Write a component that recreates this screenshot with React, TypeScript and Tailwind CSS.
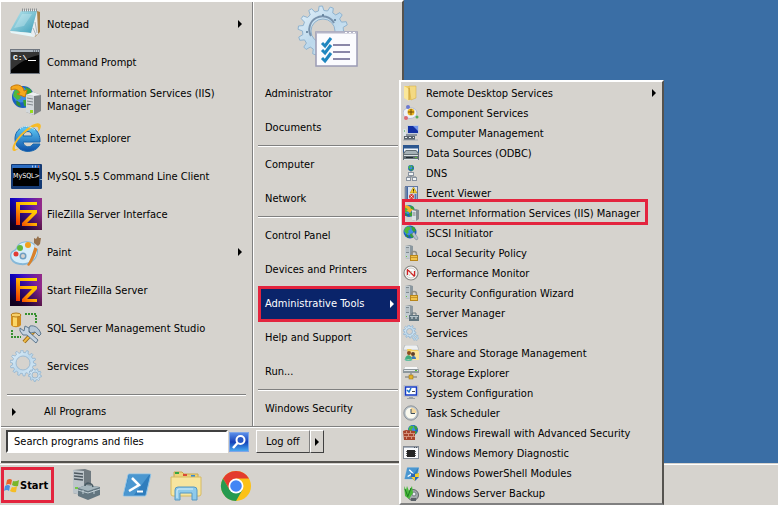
import type { ReactNode } from "react";

interface IconProps {
  className?: string;
}

interface MenuItem {
  label: string;
  icon?: ReactNode;
  submenu?: boolean;
  marked?: boolean;
}

/* ---------- shared drawing parts ---------- */

interface GearProps {
  cx: number;
  cy: number;
  outer: number;
  body: number;
  hole: number;
  teeth: number;
  line?: number;
}

function gearPath({ cx, cy, outer, body, teeth }: GearProps) {
  const points: string[] = [];
  for (let i = 0; i < teeth; i++) {
    const offsets: [number, number][] = [
      [0, body],
      [0.15, outer],
      [0.45, outer],
      [0.6, body],
    ];
    for (const [offset, radius] of offsets) {
      const angle = ((i + offset) / teeth) * Math.PI * 2;
      points.push(
        `${(cx + Math.cos(angle) * radius).toFixed(2)} ${(cy + Math.sin(angle) * radius).toFixed(2)}`,
      );
    }
  }
  return `M${points.join("L")}Z`;
}

function Gear(props: GearProps) {
  const { cx, cy, hole, line = 0.8 } = props;
  const ring = `M${cx - hole} ${cy}a${hole} ${hole} 0 1 0 ${hole * 2} 0a${hole} ${hole} 0 1 0 ${-hole * 2} 0Z`;

  return (
    <g>
      <defs>
        <linearGradient id="gear" x1="0" y1="0" x2="1" y2="1">
          <stop offset="0" stopColor="#e6f3fb" />
          <stop offset="0.5" stopColor="#bcd8ec" />
          <stop offset="1" stopColor="#dcecf7" />
        </linearGradient>
      </defs>
      <path
        d={gearPath(props) + ring}
        fill="url(#gear)"
        fillRule="evenodd"
        stroke="#8fb3cf"
        strokeWidth={line}
      />
    </g>
  );
}

function Tower() {
  return (
    <g>
      <path d="M2 1 7 0l3 1v12l-3 1-5-1z" fill="#8b979e" />
      <path d="M2 1h5v13l-5-1z" fill="#c3ccd1" />
      <path d="M3 3h3M3 5h3M3 7h3" stroke="#3d4a52" />
      <path d="M3 4h3M3 6h3" stroke="#f2f5f6" />
      <rect x="3" y="11" width="1" height="1" fill="#6bbf3a" />
    </g>
  );
}

function Globe({ cx, cy, r }: { cx: number; cy: number; r: number }) {
  return (
    <g transform={`translate(${cx} ${cy}) scale(${r / 10})`}>
      <circle r="10" fill="#1b5fc0" />
      <circle cx="-2" cy="-2" r="7" fill="#3d8be6" />
      <path d="M-8-5C-5-9-1-9 1-7L0-4l-3 2 1 3-3 2-4-4z" fill="#4fb83c" />
      <path d="M2-9 7-7 9-2 6 0 3-3zM0 3l5-1 3 2-4 5-3-1z" fill="#3aa334" />
      <path d="M-6 3l3 2 1 4-4-2z" fill="#2f8f34" />
    </g>
  );
}

function Padlock() {
  return (
    <g>
      <path d="M8.500 11V9a2.500 2.500 0 0 1 5 0v2" fill="none" stroke="#8d8d86" strokeWidth="1.500" />
      <rect x="7" y="10" width="8" height="6" fill="#b8861b" />
      <rect x="8" y="11" width="6" height="4" fill="#f0c34c" />
      <path d="M8 12.500h6" stroke="#c9952b" />
    </g>
  );
}

/* ---------- large icons ---------- */

function Svg32({ children, className = "size-8" }: IconProps & { children: ReactNode }) {
  return (
    <svg viewBox="0 0 32 32" className={`${className} shrink-0`} aria-hidden="true">
      {children}
    </svg>
  );
}

function NotepadIcon() {
  return (
    <Svg32>
      <defs>
        <linearGradient id="pad" x1="0" y1="0" x2="1" y2="1">
          <stop offset="0" stopColor="#bfe9f0" />
          <stop offset="1" stopColor="#3c9db8" />
        </linearGradient>
      </defs>
      <path d="M27 3l3 1v20l-5 5z" fill="#a8814a" />
      <path d="M13 2h14l1 24-5 3z" fill="#e9edf0" />
      <path d="M23 20l3 7M25 14l2 11" stroke="#a9b5bd" />
      <path d="M11 3h16l-6 22L0 23z" fill="url(#pad)" />
      <path d="M0 23l21 2 3 4L1 25z" fill="#e6f6f9" />
      <path d="M12 6h10l-8 12-10 2z" fill="#e4f8fb" opacity="0.3" />
      <path d="M12 2h15" stroke="#8d9396" strokeWidth="3" strokeDasharray="1 1" />
    </Svg32>
  );
}

function CommandPromptIcon() {
  return (
    <Svg32>
      <rect x="0" y="3" width="30" height="25" fill="#707780" />
      <rect x="1" y="4" width="28" height="2" fill="#a9b2bb" />
      <path d="M23 5h1M25 5h1M27 5h1" stroke="#39414a" />
      <rect x="1" y="6" width="28" height="21" fill="#050505" />
      <path d="M1 6h28v3C18 11 9 17 1 24z" fill="#343434" />
      <text x="3" y="14" fill="#fff" fontSize="8" fontWeight="bold" fontFamily="Liberation Mono, monospace">
        C:\
      </text>
      <path d="M18 14.500h8" stroke="#fff" />
    </Svg32>
  );
}

function IisIcon() {
  return (
    <Svg32>
      <Globe cx={13} cy={13} r={11} />
      <path d="M1 3C8-2 14 3 14 7l3-1-2 7-8-3 3-1C9 6 5 4 1 6z" fill="#f6a81c" stroke="#c87808" />
      <path d="M16 11l7-3 8 3v16l-7 4-8-3z" fill="#7e8386" />
      <path d="M16 11l8 1v19l-8-3z" fill="#d3d8db" />
      <path d="M17 14l6 1M17 17l6 1M17 20l6 1" stroke="#82898d" />
      <path d="M16 11l7-3 8 3-7 1z" fill="#edf0f1" />
      <rect x="20" y="26" width="3" height="3" fill="#9add1f" />
    </Svg32>
  );
}

function InternetExplorerIcon() {
  return (
    <Svg32>
      <defs>
        <linearGradient id="ie" x1="0" y1="0" x2="0" y2="1">
          <stop offset="0" stopColor="#62cdf6" />
          <stop offset="1" stopColor="#0b4fa8" />
        </linearGradient>
      </defs>
      <path
        d="M30 20H13c1 6 8 6 10 2h7c-4 11-25 10-25-5C5 0 31 0 30 20zM13 14h9c0-6-8-6-9 0z"
        fill="url(#ie)"
        stroke="#1766ae"
        fillRule="evenodd"
      />
      <path
        d="M9 26C2 33 0 27 6 18S26-2 30 2c2 2 0 6-2 8 1-4 0-6-3-5C19 6 7 17 5 24c-1 4 1 4 4 2z"
        fill="#f7bb27"
      />
      <path d="M10 7c4-4 11-3 15 1" stroke="#c5eefe" fill="none" />
    </Svg32>
  );
}

function MySqlIcon() {
  return (
    <Svg32>
      <rect x="1" y="4" width="31" height="25" rx="1" fill="#153a73" />
      <rect x="2" y="5" width="28" height="3" fill="#2c6cc0" />
      <path d="M22 6.500h1M25 6.500h1" stroke="#a9c8ef" strokeWidth="2" />
      <path d="M28 6.500h1" stroke="#e1502f" strokeWidth="2" />
      <rect x="3" y="8" width="26" height="18" fill="#000" />
      <text
        x="3"
        y="18"
        fill="#fff"
        fontSize="7"
        textRendering="geometricPrecision"
        fontFamily="DejaVu Sans Condensed, sans-serif"
      >
        {"MySQL>_"}
      </text>
    </Svg32>
  );
}

function FileZillaIcon() {
  return (
    <Svg32>
      <defs>
        <linearGradient id="fz-bg" x1="0" y1="0" x2="1" y2="0">
          <stop offset="0" stopColor="#0000f0" />
          <stop offset="1" stopColor="#962a86" />
        </linearGradient>
        <linearGradient id="fz-shade" x1="1" y1="0" x2="0.3" y2="1">
          <stop offset="0.3" stopColor="#200008" stopOpacity="0" />
          <stop offset="1" stopColor="#120008" stopOpacity="0.9" />
        </linearGradient>
        <linearGradient id="fz-ink" x1="1" y1="0" x2="0" y2="1">
          <stop offset="0" stopColor="#ffe600" />
          <stop offset="0.5" stopColor="#ffb000" />
          <stop offset="1" stopColor="#f02000" />
        </linearGradient>
      </defs>
      <rect width="32" height="32" fill="url(#fz-bg)" />
      <rect width="32" height="32" fill="url(#fz-shade)" />
      <path d="M6 4h21v3H10v5h17v3L17 25h10v3H12v-3l10-10H10v12H6z" fill="url(#fz-ink)" />
    </Svg32>
  );
}

function PaintIcon() {
  return (
    <Svg32>
      <path d="M12 6c9-3 17 3 16 10-1 9-9 14-18 13C2 28-2 22 1 16c2-2 4-2 5-4 1-3 3-5 6-6z" fill="#86b8d8" />
      <path d="M12 7c9-3 15 3 15 9-1 8-8 12-17 11C3 26 0 21 2 17c2-2 4-2 5-4 1-3 2-5 5-6z" fill="#d6edf9" />
      <circle cx="18" cy="9" r="3" fill="#f2a11b" />
      <circle cx="10" cy="12" r="3" fill="#62b83f" />
      <circle cx="6" cy="18" r="2.500" fill="#e23c34" />
      <circle cx="13" cy="20" r="3.500" fill="#6d9fc2" />
      <circle cx="13" cy="20" r="2" fill="#d6d3ce" />
      <path d="M25 9l3 2c-2 7-4 13-9 19l-2-1c4-6 6-13 8-20z" fill="#d9822b" />
      <path d="M25 7l4 2-1 4-4-2z" fill="#d5d9dc" />
      <path d="M24 2l2 1 2-3 1 2 2 0-1 6-2 2-4-3z" fill="#96714c" />
    </Svg32>
  );
}

function SqlStudioIcon() {
  return (
    <Svg32>
      <path d="M1 3v10c2 3 8 3 10 0V3z" fill="#d28e1e" />
      <path d="M3 3v11h4V3z" fill="#fbd667" />
      <ellipse cx="6" cy="3" rx="5" ry="2" fill="#f7cf69" stroke="#b67b18" />
      <path d="M15 2h11v10" fill="none" stroke="#37902f" strokeWidth="2" strokeDasharray="2 1" />
      <path d="M2 18v7h9" fill="none" stroke="#37902f" strokeWidth="2" strokeDasharray="2 1" />
      <path d="M25 18L14 30" stroke="#9a6a17" strokeWidth="4" />
      <path d="M25 18L14 30" stroke="#edb944" strokeWidth="2" />
      <path d="M20 14c5-1 9 2 11 8l-2 2-4-4-4 1-3-3z" fill="#b7c7d6" stroke="#5f788e" />
      <path d="M10 16l4 3 1-5 4 2 0 4 9 8-2 3-9-8-4 0-3-4z" fill="#c4d3e1" stroke="#5f788e" />
    </Svg32>
  );
}

function ServicesLargeIcon() {
  return (
    <Svg32>
      <Gear cx={13} cy={13} outer={13} body={10.5} hole={7} teeth={14} />
      <Gear cx={25} cy={25} outer={6.5} body={5} hole={3} teeth={9} />
    </Svg32>
  );
}

function AdminToolsPicture() {
  return (
    <svg viewBox="0 0 64 64" className="size-16" aria-hidden="true">
      <Gear cx={26} cy={27} outer={25} body={20.5} hole={12} teeth={14} line={1} />
      <path d="M14 32a13 13 0 0 1 23-13" fill="none" stroke="#7993ad" strokeWidth="2" />
      <circle cx="26" cy="11" r="1" fill="#557590" />
      <circle cx="10" cy="28" r="1" fill="#557590" />
      <circle cx="38" cy="16" r="1" fill="#557590" />
      <rect x="19" y="28" width="41" height="34" fill="#fbfbfe" stroke="#9b9bb4" strokeWidth="1.500" />
      <path d="M19 28.500h41" stroke="#b6b6c8" strokeWidth="2" />
      <path d="M48 28.500h2M52 28.500h2M56 28.500h2" stroke="#fff" />
      <path d="M36 41h17M36 48h17M36 55h17" stroke="#8a87a8" strokeWidth="2" />
      <path d="M25 39l3 3 6-8M25 46l3 3 6-8M25 54l3 3 6-8" fill="none" stroke="#1f86bf" strokeWidth="3" />
    </svg>
  );
}

/* ---------- small icons ---------- */

function Svg16({ children }: { children: ReactNode }) {
  return (
    <svg viewBox="0 0 16 16" className="size-4 shrink-0" aria-hidden="true">
      {children}
    </svg>
  );
}

function FolderIcon() {
  return (
    <Svg16>
      <path d="M1 1h5l2 2v12l-7-2z" fill="#eecb60" />
      <path d="M6 1h7v12l-5 2z" fill="#f3d982" stroke="#d0a83c" strokeWidth="0.500" />
      <path d="M1 1l5 3v12l-5-3z" fill="#fbe79a" />
      <path d="M6 3v12" stroke="#c99a2e" />
    </Svg16>
  );
}

function ComponentIcon() {
  return (
    <Svg16>
      <ellipse cx="7" cy="8" rx="7" ry="5.500" fill="#eef1f8" stroke="#b5bdd4" />
      <circle cx="5" cy="2" r="2" fill="#6c79cf" />
      <circle cx="3" cy="13" r="2" fill="#dc6a74" />
      <circle cx="14" cy="12" r="1.500" fill="#55ad5a" />
      <circle cx="8" cy="7" r="3.500" fill="#edb620" />
      <path d="M8 4v6M5 7h6" stroke="#6e4a08" />
    </Svg16>
  );
}

function ComputerIcon() {
  return (
    <Svg16>
      <rect x="4" y="0" width="12" height="9" fill="#c4ccd8" />
      <rect x="5" y="1" width="10" height="7" fill="#1330a3" />
      <path d="M10 1h5v5z" fill="#7295ea" />
      <path d="M0 4h3v7H0z" fill="#dce2e5" />
      <path d="M1 6h1" stroke="#37a23b" />
      <path d="M3 9h11v2H3z" fill="#8c949d" />
      <rect x="1" y="11" width="11" height="4" fill="#59636c" />
      <path d="M2 12.500h2M6 12.500h2M10 12.500h1" stroke="#e7edf0" />
      <path d="M0 15h15" stroke="#a3abb0" />
    </Svg16>
  );
}

function OdbcIcon() {
  return (
    <Svg16>
      <rect x="0.500" y="0.500" width="15" height="8" fill="#edf3f8" stroke="#2c578f" />
      <path d="M0 2h16" stroke="#2c578f" strokeWidth="3" />
      <path d="M3 5h10l3 3v7H0V8z" fill="#626d73" />
      <path d="M3 6h10l2 3H1z" fill="#a5b1b6" />
      <path d="M1 10.500h14M1 14.500h14" stroke="#dce2e4" />
      <path d="M3 12.500h7" stroke="#222c32" />
      <path d="M12 12.500h2" stroke="#62c23b" />
    </Svg16>
  );
}

function DnsIcon() {
  return (
    <Svg16>
      <Globe cx={8} cy={3} r={3} />
      <path d="M8 6v6M4 12h9" stroke="#7b858f" />
      <rect x="5.500" y="7.500" width="5" height="3" fill="#f1f4f6" stroke="#8993a0" />
      <rect x="3.500" y="12.500" width="4" height="3" fill="#f1f4f6" stroke="#8993a0" />
      <rect x="9.500" y="12.500" width="4" height="3" fill="#f1f4f6" stroke="#8993a0" />
    </Svg16>
  );
}

function EventViewerIcon() {
  return (
    <Svg16>
      <rect x="2.500" y="1.500" width="12" height="13" fill="#dae4f0" stroke="#6379a3" />
      <rect x="3" y="2" width="2" height="12" fill="#4468a5" />
      <path d="M1 3h3M1 5h3M1 7h3M1 9h3M1 11h3M1 13h3" stroke="#909aa6" />
      <path d="M10.500 2l3.500 6H7z" fill="#f5cf29" stroke="#a77d12" strokeWidth="0.500" />
      <path d="M10.500 4v2M10.500 6.500v1" stroke="#463505" />
      <circle cx="8.500" cy="11.500" r="2.500" fill="#d33a31" />
      <path d="M7.500 10.500l2 2M9.500 10.500l-2 2" stroke="#fff" strokeWidth="0.800" />
      <path d="M12.500 9v5" stroke="#5277ac" strokeWidth="2" />
    </Svg16>
  );
}

function IisSmallIcon() {
  return (
    <Svg16>
      <Globe cx={6} cy={6} r={6} />
      <path d="M0 1c4-2 7 0 8 3h2L7 8 3 5h2C4 3 2 2 0 3z" fill="#f5b026" />
      <path d="M9 5l4-1 3 1v9l-3 2-4-1z" fill="#838d92" />
      <path d="M9 5l4 1v10l-4-1z" fill="#dce2e5" />
      <path d="M9.500 8h3M9.500 10h3" stroke="#728087" />
    </Svg16>
  );
}

function IscsiIcon() {
  return (
    <Svg16>
      <Globe cx={7} cy={7} r={6.5} />
      <path d="M9 9l2-2 4 6-1 2-2-1z" fill="#b5c1cb" stroke="#667a8c" strokeWidth="0.500" />
    </Svg16>
  );
}

function SecurityIcon() {
  return (
    <Svg16>
      <Tower />
      <Padlock />
    </Svg16>
  );
}

function PerformanceIcon() {
  return (
    <Svg16>
      <circle cx="8" cy="8" r="7" fill="#fbfbfa" stroke="#898984" strokeWidth="1.200" />
      <circle cx="8" cy="8" r="5" fill="none" stroke="#9c9c98" strokeWidth="0.500" />
      <path d="M4.500 4.500l7 7M4.500 4v6M11.500 6v5" stroke="#cf2424" strokeWidth="1.300" />
      <path d="M6 11l3-5" stroke="#a5b8a5" strokeWidth="0.700" />
    </Svg16>
  );
}

function ServerManagerIcon() {
  return (
    <Svg16>
      <Tower />
      <rect x="6" y="10" width="10" height="6" fill="#5e737d" />
      <path d="M9 10V8h4v2" fill="none" stroke="#64757d" />
      <path d="M7 11.500h8" stroke="#b6c5cb" />
      <path d="M9 12v2M13 12v2" stroke="#dfe6e9" />
    </Svg16>
  );
}

function ServicesIcon() {
  return (
    <Svg16>
      <Gear cx={6.5} cy={6.5} outer={6.5} body={5} hole={3} teeth={10} />
      <Gear cx={12.5} cy={12.5} outer={3.2} body={2.3} hole={1} teeth={7} line={0.6} />
    </Svg16>
  );
}

function ShareIcon() {
  return (
    <Svg16>
      <path d="M2 0h12l2 5H0z" fill="#eef0f1" stroke="#9ba2a6" strokeWidth="0.500" />
      <path d="M4 4h4l1 1h6v10H6z" fill="#f1ce5e" />
      <path d="M8 6h8v9H5z" fill="#fae49b" />
      <circle cx="6" cy="8" r="2" fill="#8b4d23" />
      <circle cx="10" cy="9" r="2" fill="#60402b" />
      <path d="M2 14c1-5 6-5 7 0z" fill="#3daa7e" />
      <path d="M8 14c0-4 5-4 5 0z" fill="#3e79b7" />
      <path d="M2 14c4 3 5 1 7 0" fill="none" stroke="#63bea0" strokeWidth="2" />
    </Svg16>
  );
}

function StorageIcon() {
  return (
    <Svg16>
      <path d="M2 2h12l2 3v3H0V5z" fill="#8d979c" />
      <path d="M2 2h12l1 2H1z" fill="#f8f9fa" />
      <path d="M1 5.500h14" stroke="#dfe4e7" />
      <path d="M12 5.500h2" stroke="#58b737" />
      <path d="M8 8v5M2 12h12" stroke="#73736e" />
      <rect x="6" y="10" width="4" height="4" fill="#e2b22a" stroke="#946c10" strokeWidth="0.500" />
    </Svg16>
  );
}

function SystemConfigIcon() {
  return (
    <Svg16>
      <rect x="1" y="0.500" width="14" height="11" fill="#e2e5e9" stroke="#a4a8ad" strokeWidth="0.500" />
      <rect x="2.500" y="2" width="11" height="8" fill="#fff" stroke="#173bc3" strokeWidth="1.500" />
      <path d="M4 5l2 2 2-4" fill="none" stroke="#1c75c8" strokeWidth="1.500" />
      <path d="M9 6.500h3" stroke="#4a4a4a" />
      <path d="M6 12h4v1H6zM4 13h8v1H4z" fill="#9ba1a6" />
    </Svg16>
  );
}

function ClockIcon() {
  return (
    <Svg16>
      <circle cx="8" cy="8" r="7.200" fill="#b7c0c7" stroke="#81898f" strokeWidth="0.800" />
      <circle cx="8" cy="8" r="5.500" fill="#faf9ee" />
      <path d="M8 8V2.500A5.500 5.500 0 0 1 13.500 8z" fill="#f2d69c" />
      <path d="M8 4v4.500h4" fill="none" stroke="#3d4e5b" />
    </Svg16>
  );
}

function FirewallIcon() {
  return (
    <Svg16>
      <Globe cx={10} cy={5} r={5} />
      <path d="M0 6l3-1 9 1v9H1z" fill="#a8452c" />
      <path
        d="M1 8.500h11M1 11.500h11M3.500 6v2M7.500 6v2M10.500 9v2M5.500 9v2M3.500 12v2M8.500 12v2"
        stroke="#e0a58e"
        strokeWidth="0.800"
      />
    </Svg16>
  );
}

function MemoryIcon() {
  return (
    <Svg16>
      <rect x="0.500" y="1.500" width="15" height="12" fill="#f8f9fb" stroke="#848a93" />
      <path d="M1 2.500h14" stroke="#a7b1be" />
      <path d="M11 2.500h1M13 2.500h1" stroke="#4a525c" />
      <path d="M3 6.500h10M3 8.500h10M3 10.500h10" stroke="#666" />
      <rect x="4" y="5" width="8" height="7" fill="#242424" />
    </Svg16>
  );
}

function PowerShellArt() {
  return (
    <g>
      <path d="M9 5h21q1 0 0.700 1L26 26q-0.300 1-1.300 1H4q-1 0-0.700-1L8 6q0.200-1 1-1z" fill="#2f7dbd" stroke="#8cc3e8" />
      <path d="M9 6h20L14 26H4z" fill="#5fa8dc" opacity="0.600" />
      <path d="M12 9l7 7-10 6" fill="none" stroke="#fff" strokeWidth="2.500" />
      <path d="M17 22.500h6" stroke="#fff" strokeWidth="2" />
    </g>
  );
}

function PowerShellModulesIcon() {
  return (
    <Svg16>
      <g transform="scale(0.52)">
        <PowerShellArt />
      </g>
      <path d="M8 8l4 1 4-1v4l-4 4-4-4z" fill="#2867b8" />
      <path d="M12 9v3h4V8zM8 12h4v4z" fill="#f3ce31" />
    </Svg16>
  );
}

function BackupIcon() {
  return (
    <Svg16>
      <circle cx="10" cy="10" r="5.500" fill="#a5aaad" stroke="#5e6468" />
      <circle cx="11" cy="9" r="2" fill="#e9edef" stroke="#737d83" />
      <path d="M1 1l2 4 1-4 2 5 3-5 1 7-4 6-4-3z" fill="#49b93b" />
      <path d="M2 4l3 8M8 3L5 11" stroke="#1f7d22" />
      <path d="M8 13h5v3H8z" fill="#5a6167" />
    </Svg16>
  );
}

function FlagIcon() {
  return (
    <svg viewBox="0 0 16 16" className="size-4 shrink-0" aria-hidden="true">
      <path d="M3 2q3-2 5 0L7 7Q5 5 2 7z" fill="#e8632a" />
      <path d="M9 3q3 1 6-1l-1 6q-3 1-6-1z" fill="#79b52c" />
      <path d="M1 8q3-2 5 0l-1 5q-2-2-5 0z" fill="#4b8fdd" />
      <path d="M8 9q3 1 5-1l-1 6q-3 1-6-1z" fill="#f5bd25" />
    </svg>
  );
}

/* ---------- data ---------- */

const programs: MenuItem[] = [
  { label: "Notepad", icon: <NotepadIcon />, submenu: true },
  { label: "Command Prompt", icon: <CommandPromptIcon /> },
  { label: "Internet Information Services (IIS) Manager", icon: <IisIcon /> },
  { label: "Internet Explorer", icon: <InternetExplorerIcon /> },
  { label: "MySQL 5.5 Command Line Client", icon: <MySqlIcon /> },
  { label: "FileZilla Server Interface", icon: <FileZillaIcon /> },
  { label: "Paint", icon: <PaintIcon />, submenu: true },
  { label: "Start FileZilla Server", icon: <FileZillaIcon /> },
  { label: "SQL Server Management Studio", icon: <SqlStudioIcon /> },
  { label: "Services", icon: <ServicesLargeIcon /> },
];

const places: MenuItem[][] = [
  [{ label: "Administrator" }, { label: "Documents" }],
  [{ label: "Computer" }, { label: "Network" }],
  [
    { label: "Control Panel" },
    { label: "Devices and Printers" },
    { label: "Administrative Tools", submenu: true, marked: true },
    { label: "Help and Support" },
    { label: "Run..." },
  ],
  [{ label: "Windows Security" }],
];

const adminTools: MenuItem[] = [
  { label: "Remote Desktop Services", icon: <FolderIcon />, submenu: true },
  { label: "Component Services", icon: <ComponentIcon /> },
  { label: "Computer Management", icon: <ComputerIcon /> },
  { label: "Data Sources (ODBC)", icon: <OdbcIcon /> },
  { label: "DNS", icon: <DnsIcon /> },
  { label: "Event Viewer", icon: <EventViewerIcon /> },
  {
    label: "Internet Information Services (IIS) Manager",
    icon: <IisSmallIcon />,
    marked: true,
  },
  { label: "iSCSI Initiator", icon: <IscsiIcon /> },
  { label: "Local Security Policy", icon: <SecurityIcon /> },
  { label: "Performance Monitor", icon: <PerformanceIcon /> },
  { label: "Security Configuration Wizard", icon: <SecurityIcon /> },
  { label: "Server Manager", icon: <ServerManagerIcon /> },
  { label: "Services", icon: <ServicesIcon /> },
  { label: "Share and Storage Management", icon: <ShareIcon /> },
  { label: "Storage Explorer", icon: <StorageIcon /> },
  { label: "System Configuration", icon: <SystemConfigIcon /> },
  { label: "Task Scheduler", icon: <ClockIcon /> },
  { label: "Windows Firewall with Advanced Security", icon: <FirewallIcon /> },
  { label: "Windows Memory Diagnostic", icon: <MemoryIcon /> },
  { label: "Windows PowerShell Modules", icon: <PowerShellModulesIcon /> },
  { label: "Windows Server Backup", icon: <BackupIcon /> },
];

/* ---------- menu pieces ---------- */

function Arrow() {
  return (
    <svg viewBox="0 0 4 8" className="h-2 w-1 shrink-0" fill="currentColor" aria-hidden="true">
      <path d="M0 0l4 4-4 4z" />
    </svg>
  );
}

function Groove() {
  return <div className="h-0.5 border-t border-b border-t-[#808080] border-b-white" />;
}

function ProgramList() {
  return (
    <div className="flex w-[252px] flex-col border-r border-r-[#808080] pt-[3px]">
      <ul>
        {programs.map((item) => (
          <li key={item.label}>
            <button className="flex h-[38px] w-full items-center gap-[5px] pr-2.5 pl-[9px] text-left">
              {item.icon}
              <span className="flex-1 pr-4 leading-[13px]">{item.label}</span>
              {item.submenu && <Arrow />}
            </button>
          </li>
        ))}
      </ul>
      <div className="px-1.5 pt-[9px]">
        <Groove />
      </div>
      <button className="flex h-[30px] items-center gap-7 px-[11px] pt-0.5 text-left">
        <Arrow />
        All Programs
      </button>
    </div>
  );
}

function PlacesList() {
  return (
    <div className="flex flex-1 flex-col border-l border-l-white pr-1">
      <div className="flex h-[74px] justify-center pt-0.5 pl-1.5">
        <AdminToolsPicture />
      </div>
      {places.map((group, index) => (
        <div key={index} className="pl-1">
          {index > 0 && (
            <div className="pt-px">
              <Groove />
            </div>
          )}
          <ul>
            {group.map((item) => (
              <li key={item.label} className="relative">
                <button
                  className={
                    item.marked
                      ? "flex h-[34px] w-full items-center justify-between bg-[#0a246a] pt-0.5 pr-1 pl-[7px] text-left text-white"
                      : "flex h-[34px] w-full items-center pt-0.5 pl-[7px] text-left"
                  }
                >
                  {item.label}
                  {item.submenu && <Arrow />}
                </button>
                {item.marked && (
                  <span className="pointer-events-none absolute top-0 -right-0.5 -bottom-0.5 left-0 z-10 border-3 border-[#e3243e]" />
                )}
              </li>
            ))}
          </ul>
        </div>
      ))}
    </div>
  );
}

function StartMenuFooter() {
  return (
    <div className="flex h-[33px] gap-[7px] pt-0.5 pl-[5px]">
      <form className="flex h-[23px] w-[243px] items-center gap-px">
        <input
          type="text"
          aria-label="Search programs and files"
          placeholder="Search programs and files"
          className="h-full min-w-0 flex-1 border-2 border-t-[#404040] border-r-white border-b-white border-l-[#404040] bg-white px-1.5 text-black placeholder:text-black"
        />
        <button
          type="button"
          aria-label="Search"
          className="flex size-5 items-center justify-center border border-[#7fa6e8] bg-linear-to-b from-[#5a8de8] via-[#1740b8] to-[#4ba8f0]"
        >
          <svg viewBox="0 0 16 16" className="size-4" fill="none" aria-hidden="true">
            <circle cx="9.500" cy="6" r="4" fill="#2858c4" stroke="#fff" strokeWidth="2" />
            <path d="M6.500 9L2 14" stroke="#fff" strokeWidth="2.500" />
          </svg>
        </button>
      </form>
      <div className="flex h-[23px]">
        <button className="border border-t-white border-r-[#808080] border-b-[#404040] border-l-white px-[9px] pt-px">
          Log off
        </button>
        <button
          aria-label="Shut down options"
          className="flex w-3.5 items-center justify-center border border-t-white border-r-[#404040] border-b-[#404040] border-l-white"
        >
          <Arrow />
        </button>
      </div>
    </div>
  );
}

function StartMenu() {
  return (
    <nav
      aria-label="Start menu"
      className="w-[404px] border-l border-l-white bg-[#d6d3ce]"
    >
      <div className="border-t-2 border-r-2 border-b-2 border-t-white border-r-[#55534f] border-b-[#55534f]">
        <div className="flex">
          <ProgramList />
          <PlacesList />
        </div>
        <Groove />
        <StartMenuFooter />
      </div>
    </nav>
  );
}

function AdminToolsMenu() {
  return (
    <nav
      aria-label="Administrative Tools"
      className="absolute bottom-0 left-[399px] w-[265px] border-2 border-t-white border-r-[#55534f] border-b-[#808080] border-l-white bg-[#d6d3ce] pt-px"
    >
      <ul>
        {adminTools.map((item) => (
          <li key={item.label} className="relative">
            <button className="flex h-5 w-full items-center pr-1.5 pl-0.5 text-left">
              {item.icon}
              <span className="flex-1 pt-0.5 pl-[7px] whitespace-nowrap">{item.label}</span>
              {item.submenu && <Arrow />}
            </button>
            {item.marked && (
              <span className="pointer-events-none absolute -top-1 right-3.5 -bottom-0.5 left-px border-3 border-[#e3243e]" />
            )}
          </li>
        ))}
      </ul>
    </nav>
  );
}

function Taskbar() {
  return (
    <footer className="h-[42px] border-t border-t-[#d6d3ce] bg-[#d6d3ce]">
      <div className="flex h-full items-center border-t border-t-white pl-px">
        <button className="flex h-9 w-[53px] items-center border-3 border-[#e3243e] pt-0.5 text-[11px] font-bold">
          <FlagIcon />
          Start
        </button>
        <div className="flex items-center gap-[18px] pl-4">
          <button aria-label="Server Manager">
            <Svg32>
              <path d="M3 1l12-1 6 2v21l-7 4-11-3z" fill="#707a80" />
              <path d="M3 1l11 1v25L3 24z" fill="#bdc5ca" />
              <path d="M4 4l9 1M4 7l9 1M4 10l9 1" stroke="#4d5860" strokeWidth="1.500" />
              <rect x="5" y="18" width="3" height="2" fill="#73c747" />
              <path d="M8 19l8-3 14 2v8l-12 5-10-4z" fill="#637680" />
              <path d="M8 19l8-3 14 2-12 4z" fill="#a6b6bd" />
              <path d="M15 17c0-4 7-4 8 1" fill="none" stroke="#465962" strokeWidth="1.500" />
              <path d="M8 21l10 3 12-4M13 21v4M24 21v4" fill="none" stroke="#c0ced4" />
            </Svg32>
          </button>
          <button aria-label="Windows PowerShell">
            <Svg32>
              <PowerShellArt />
            </Svg32>
          </button>
          <button aria-label="Windows Explorer">
            <Svg32>
              <path d="M4 3h8l2 2h14v5H4z" fill="#edd37a" stroke="#c8a84e" />
              <path d="M5 4h4" stroke="#36a641" strokeWidth="2" />
              <path d="M13 6h4" stroke="#db4938" strokeWidth="2" />
              <path d="M21 7h4" stroke="#3689d4" strokeWidth="2" />
              <path d="M1 8h30v17q0 2-2 2H3q-2 0-2-2z" fill="#f7e59f" stroke="#d5ba63" />
              <path d="M5 31V21q0-3 3-3h16q3 0 3 3v10h-5v-7H10v7z" fill="#8ecaea" stroke="#5697c2" />
              <path d="M7 29v-7q0-2 2-2h14" fill="none" stroke="#d8f1fc" />
            </Svg32>
          </button>
          <button aria-label="Google Chrome">
            <Svg32>
              <circle cx="16" cy="17" r="15" fill="#fbc116" />
              <path d="M3 9.500A15 15 0 0 1 29 9.500H16l-6.500 11.300z" fill="#e33b2e" />
              <path d="M3 9.500A15 15 0 0 0 16 32l6.500-11.300H9.500z" fill="#269a50" />
              <circle cx="16" cy="17" r="7.500" fill="#fff" />
              <circle cx="16" cy="17" r="5.800" fill="#4285f4" />
            </Svg32>
          </button>
        </div>
      </div>
    </footer>
  );
}

export default function App() {
  return (
    <div className="relative flex min-h-screen flex-col bg-[#3a6ea5] font-['DejaVu_Sans_Condensed','DejaVu_Sans',sans-serif] text-[11px] text-black">
      <main className="flex-1">
        <StartMenu />
      </main>
      <Taskbar />
      <AdminToolsMenu />
    </div>
  );
}
